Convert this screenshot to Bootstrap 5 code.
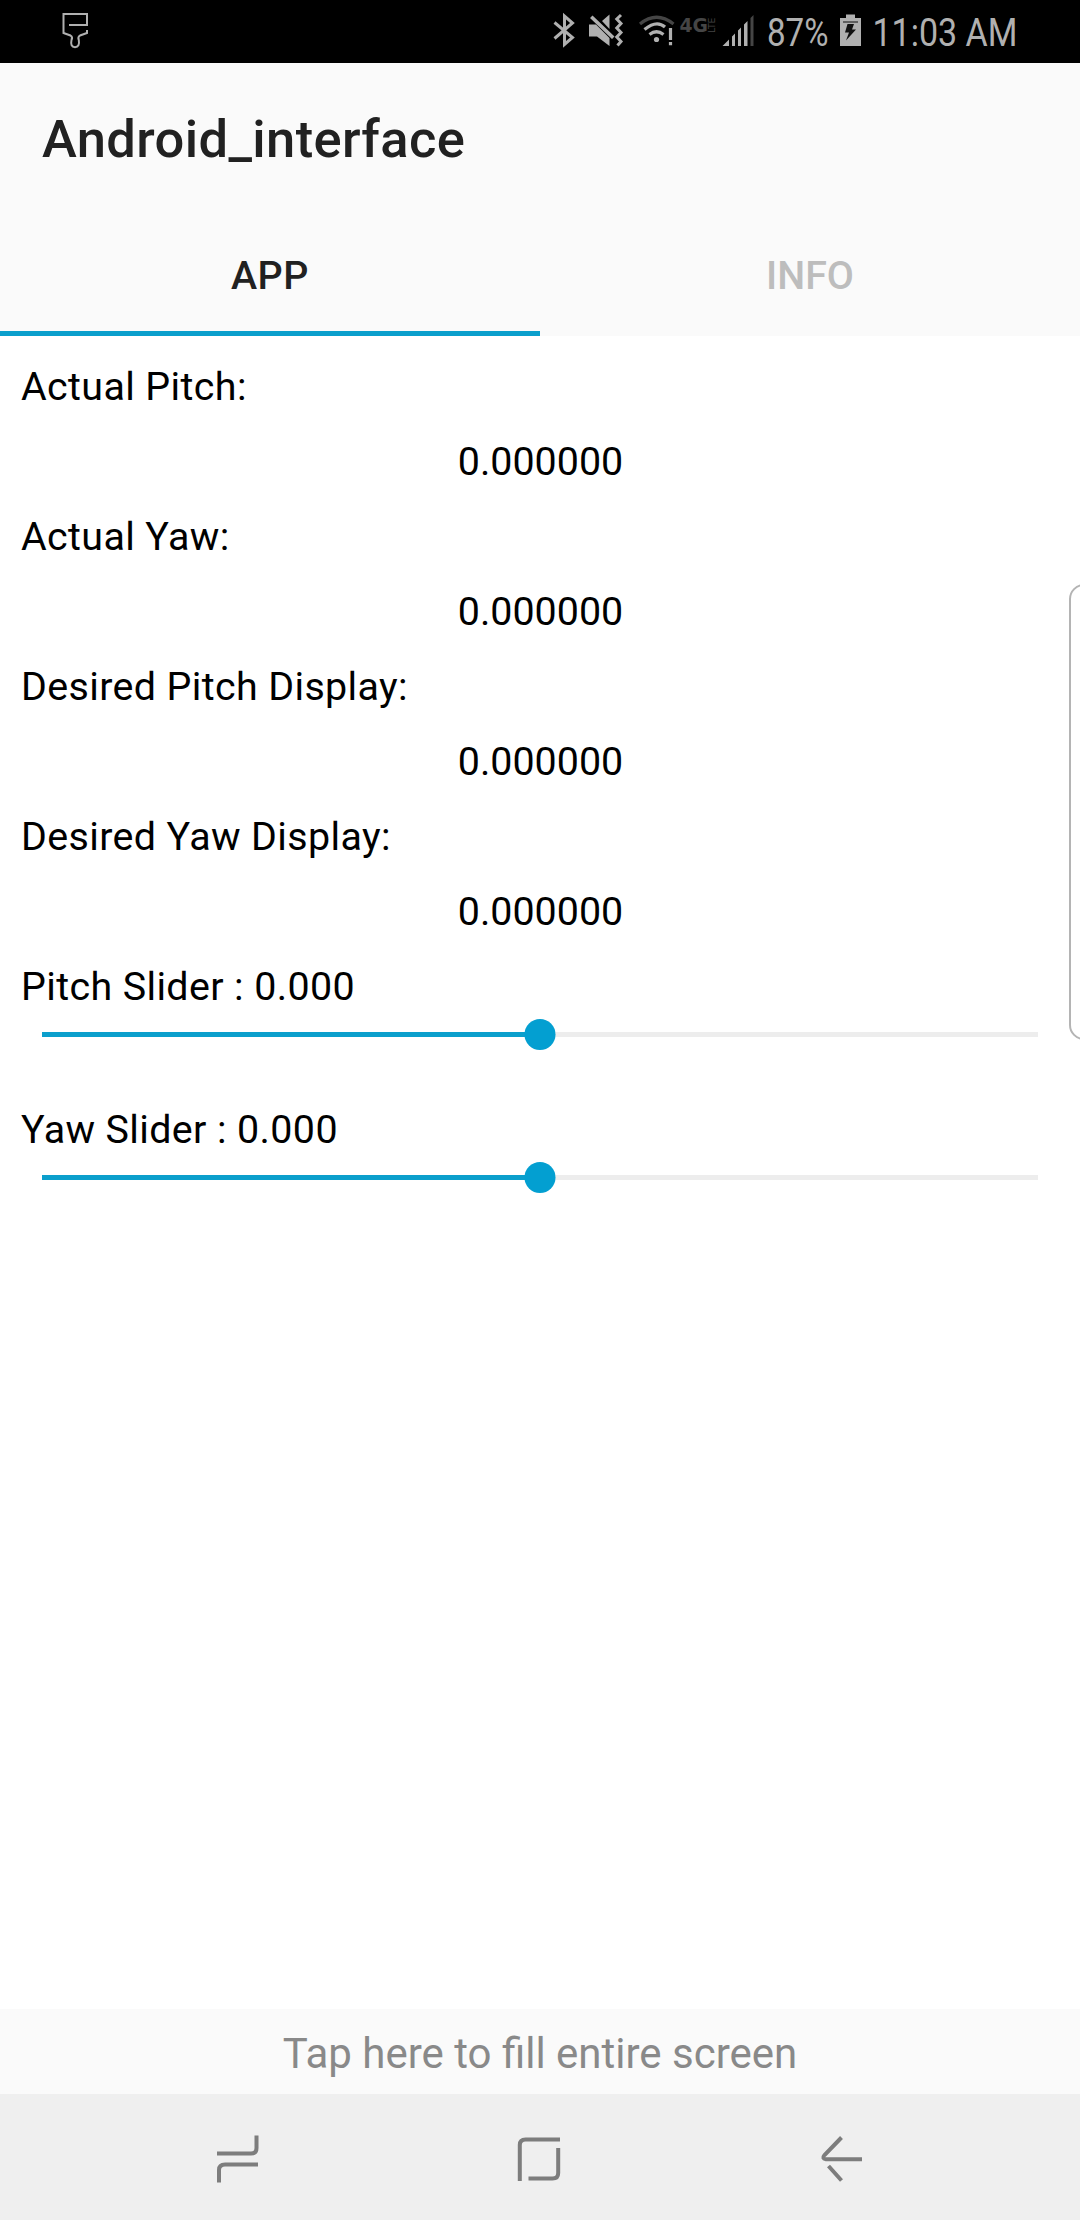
<!DOCTYPE html>
<html lang="en">
<head>
<meta charset="utf-8">
<meta name="viewport" content="width=device-width, initial-scale=1">
<title>Android_interface</title>
<link href="https://cdn.jsdelivr.net/npm/bootstrap@5.3.0/dist/css/bootstrap.min.css" rel="stylesheet">
<style>
body{font-family:Roboto,"Liberation Sans",sans-serif;color:#000;font-size:39.4px;line-height:75px}
.screen{width:1080px;height:2220px;background:#fff}
.status-bar{height:63px;background:#000;padding-left:60px;padding-right:60px}
.status-bar svg{display:block;height:63px;flex:none;overflow:visible}
.app-head{background:#fafafa;color:#212121}
.app-title{height:147px;padding:0 42px;font-size:52.5px;font-weight:500;line-height:152px;letter-spacing:.37px}
.app-tabs{height:126px}
.app-tabs .nav-link{height:126px;padding:0;border-radius:0;border-bottom:5px solid transparent;font-size:39.4px;font-weight:500;line-height:132px;color:#bdbdbd}
.app-tabs .nav-link.active{color:#212121;border-bottom-color:#0b9fcc;letter-spacing:.6px}
.readings{padding:13px 21px 0}
.line{height:75px;line-height:76px;white-space:nowrap;letter-spacing:.38px}
.line.text-center{letter-spacing:0;padding-left:1px}
.slider-block{height:143px}
.slider-block .line{height:68px}
.seek{height:31px;margin:2px 21px 0}
.seek .track{height:5px;background:#ededed;border-radius:0;overflow:visible}
.seek .progress-bar{background:#0b9fcc}
.thumb{width:31px;height:31px;background:#039fd1;top:0}
.edge-panel{left:1069px;top:584px;width:30px;height:456px;border:2px solid #b4b4b4;border-radius:17px}
.fill-hint{height:85px;background:#fafafa;color:#898989;font-size:42px;line-height:90px}
.soft-keys{height:126px;background:#efefef}
.soft-keys svg{fill:none;stroke:#7d7d7d;stroke-width:4;display:block}
.clock-text{font-family:Roboto,"Liberation Sans",sans-serif;font-size:39.4px;line-height:1}
</style>
<script src="https://cdn.jsdelivr.net/npm/bootstrap@5.3.0/dist/js/bootstrap.bundle.min.js"></script>
</head>
<body>
<div class="screen d-flex flex-column position-relative overflow-hidden">
  <header class="status-bar d-flex justify-content-between">
    <svg width="32" viewBox="60 0 32 63" fill="none" stroke="#b0b0b0" stroke-width="2"><path d="M69 25H87V14H63.5V33L70.5 35.5Q73 37 71.5 40Q70 47 75 47.200Q80 47 78.800 40Q77.500 37 80 35.500L87 33V30"/></svg>
    <div class="d-flex">
      <svg width="26" viewBox="552 0 26 63" fill="none" stroke="#b0b0b0" stroke-width="3"><path d="M554.500 22.500L572.500 37.500L564.500 44.500V16L572.500 23L554.500 38.500"/></svg>
      <svg width="58" viewBox="578 0 58 63" fill="#b0b0b0"><path d="M589 24.500H596L609.500 38V46L597 36.500H589ZM602 21L609.500 14.500V29ZM590 18L592.500 15.500L614.500 36.500L612 39Z"/><path d="M621 15L616.800 19L621 23.500L616.800 28L621 32.500L616.800 37L621 41.500L617.500 45.500" fill="none" stroke="#b0b0b0" stroke-width="3"/></svg>
      <svg width="42" viewBox="636 0 42 63" fill="none" stroke="#b0b0b0" stroke-width="3.200"><path d="M640 24Q656.500 10.500 673.500 24" stroke="#454545"/><path d="M644.500 29.500Q656.500 19.500 665 27M649.500 34.500Q656.500 29 663.500 34.500"/><circle cx="656.500" cy="39.500" r="2.600" fill="#b0b0b0" stroke="none"/><path d="M670.500 28V40M670.500 42V45.200"/></svg>
      <svg width="42" viewBox="678 0 42 63" fill="#454545"><text x="679.500" y="32" font-family="DejaVu Sans,sans-serif" font-size="19" font-weight="700" textLength="28.500" lengthAdjust="spacingAndGlyphs">4G</text><text transform="translate(715 33) rotate(-90)" font-family="DejaVu Sans,sans-serif" font-size="8.300" textLength="15.500" lengthAdjust="spacingAndGlyphs">LTE</text></svg>
      <svg width="42" viewBox="720 0 42 63" fill="#b0b0b0"><path d="M722.500 46L729 39.500V46ZM732 46V36.500L735 33.500V46ZM738 46V30.500L741 27.500V46ZM744 46V24.500L747.500 21V46Z"/><path d="M750.500 18L753.500 15V46H750.500Z" fill="#454545"/></svg>
      <svg width="74" viewBox="762 0 74 63" fill="#b0b0b0"><text class="clock-text" x="767" y="46" textLength="61.500" lengthAdjust="spacingAndGlyphs">87%</text></svg>
      <svg width="30" viewBox="836 0 30 63"><path d="M840 18H846V14.500H855V18H861V46H840Z" fill="#b0b0b0"/><path d="M843 22H858" stroke="#444" stroke-width="1.500"/><path d="M847.500 24H854L852 29.500H856L846 40.500L849 32.500H845Z" fill="#111"/></svg>
      <svg width="154" viewBox="866 0 154 63" fill="#b0b0b0"><text class="clock-text" x="872.500" y="46" textLength="145" lengthAdjust="spacingAndGlyphs">11:03 AM</text></svg>
    </div>
  </header>

  <div class="app-head">
    <h1 class="app-title m-0">Android_interface</h1>
    <nav class="app-tabs nav nav-pills nav-fill">
      <a class="nav-link nav-item active bg-transparent w-50" href="#">APP</a>
      <a class="nav-link nav-item w-50" href="#">INFO</a>
    </nav>
  </div>

  <main class="readings flex-grow-1">
    <div class="line">Actual Pitch:</div>
    <div class="line text-center">0.000000</div>
    <div class="line">Actual Yaw:</div>
    <div class="line text-center">0.000000</div>
    <div class="line">Desired Pitch Display:</div>
    <div class="line text-center">0.000000</div>
    <div class="line">Desired Yaw Display:</div>
    <div class="line text-center">0.000000</div>
    <div class="slider-block">
      <div class="line">Pitch Slider : 0.000</div>
      <div class="seek d-flex align-items-center position-relative">
        <div class="track progress w-100"><div class="progress-bar" style="width:50%"></div></div>
        <span class="thumb rounded-circle position-absolute start-50 translate-middle-x"></span>
      </div>
    </div>
    <div class="slider-block">
      <div class="line">Yaw Slider : 0.000</div>
      <div class="seek d-flex align-items-center position-relative">
        <div class="track progress w-100"><div class="progress-bar" style="width:50%"></div></div>
        <span class="thumb rounded-circle position-absolute start-50 translate-middle-x"></span>
      </div>
    </div>
  </main>

  <div class="edge-panel position-absolute"></div>
  <div class="fill-hint text-center">Tap here to fill entire screen</div>
  <footer class="soft-keys d-flex">
    <svg width="480" height="126" viewBox="0 2094 480 126"><path d="M217 2153.500H251Q256.500 2153.500 256.500 2148V2135.500M258 2164.500H225Q219 2164.500 219 2170V2182.500"/></svg>
    <svg width="120" height="126" viewBox="480 2094 120 126"><path d="M560 2139.500H525.500Q519.800 2139.500 519.800 2145V2181M558.200 2148V2173Q558.200 2178.500 552.500 2178.500H528.500"/></svg>
    <svg width="480" height="126" viewBox="600 2094 480 126"><path d="M862 2159.200H826Q821.500 2158.500 824.500 2155L841.500 2137.500M828.500 2166L841.500 2180.500"/></svg>
  </footer>
</div>
</body>
</html>
